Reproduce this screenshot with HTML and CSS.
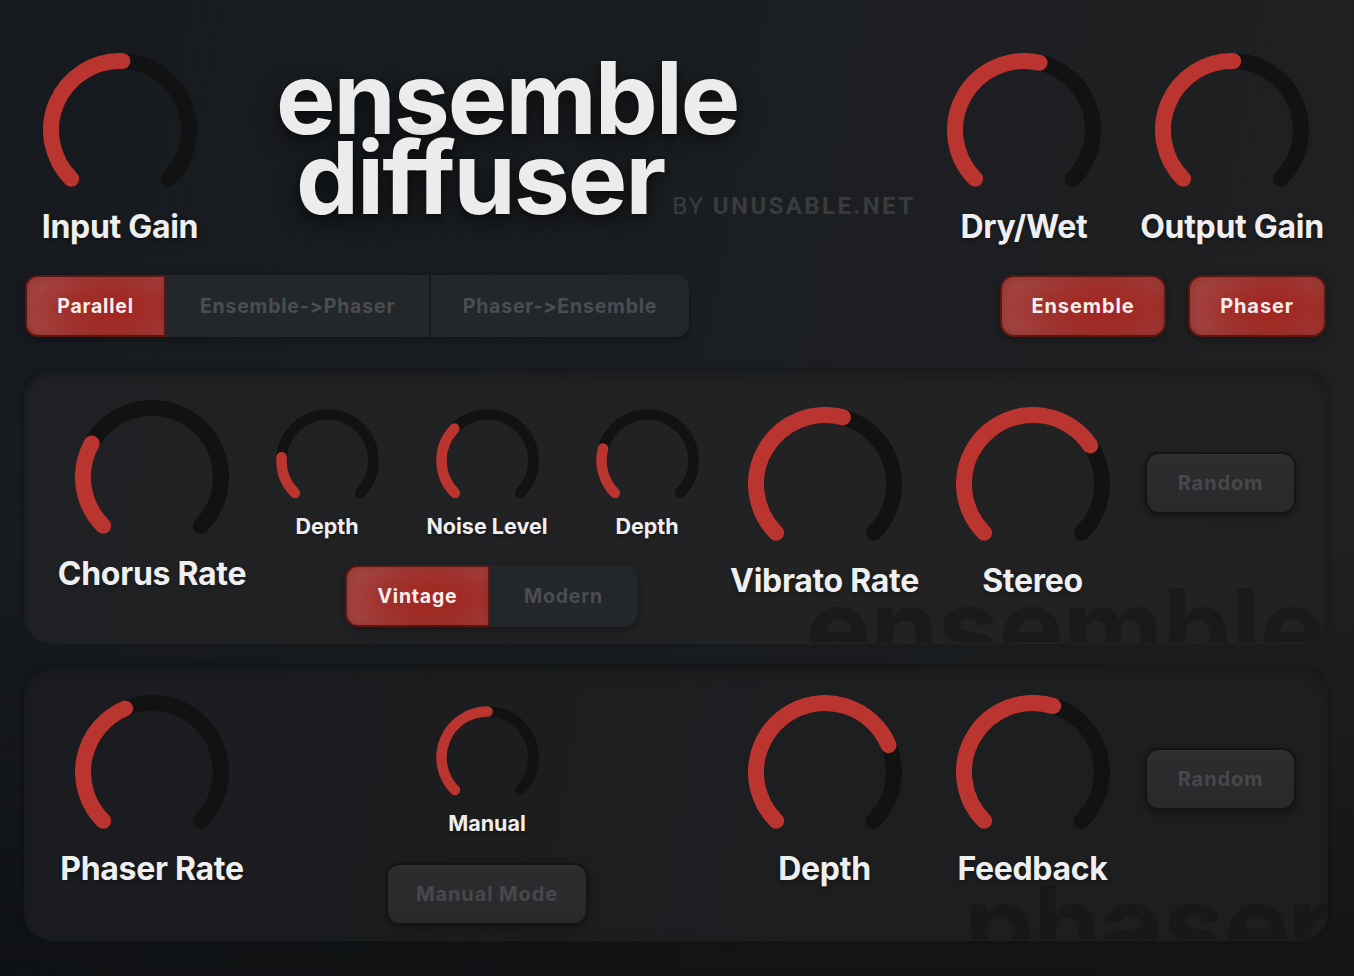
FILE: index.html
```html
<!DOCTYPE html>
<html lang="en">
<head>
<meta charset="utf-8">
<title>ensemble diffuser</title>
<link rel="stylesheet" href="styles.css">
</head>
<body>
<div class="app">
  <header class="top">
    <div class="kg kg-input">
      <svg class="knob big" viewBox="0 0 154 154"><path class="track" d="M28.21 125.79A69 69 0 1 1 125.79 125.79"/><path class="val" d="M28.21 125.79A69 69 0 0 1 79.41 8.04"/></svg>
      <div class="lbl">Input Gain</div>
    </div>
    <div class="title">
      <div class="t1">ensemble</div>
      <div class="t2">diffuser<span class="by">BY <b>UNUSABLE.NET</b></span></div>
    </div>
    <div class="kg">
      <svg class="knob big" viewBox="0 0 154 154"><path class="track" d="M28.21 125.79A69 69 0 1 1 125.79 125.79"/><path class="val" d="M28.21 125.79A69 69 0 0 1 92.52 9.77"/></svg>
      <div class="lbl">Dry/Wet</div>
    </div>
    <div class="kg kg-out">
      <svg class="knob big" viewBox="0 0 154 154"><path class="track" d="M28.21 125.79A69 69 0 1 1 125.79 125.79"/><path class="val" d="M28.21 125.79A69 69 0 0 1 78.20 8.01"/></svg>
      <div class="lbl">Output Gain</div>
    </div>
  </header>

  <div class="modes">
    <div class="seg seg-routing">
      <div class="sb on s-par">Parallel</div>
      <div class="sb s-ep">Ensemble-&gt;Phaser</div>
      <div class="sb s-pe">Phaser-&gt;Ensemble</div>
    </div>
    <div class="toggles">
      <div class="btn red b-ens">Ensemble</div>
      <div class="btn red b-pha">Phaser</div>
    </div>
  </div>

  <section class="panel p-ens">
    <div class="wm">ensemble</div>
    <div class="col c1 pt-29">
      <svg class="knob big" viewBox="0 0 154 154"><path class="track" d="M28.21 125.79A69 69 0 1 1 125.79 125.79"/><path class="val" d="M28.21 125.79A69 69 0 0 1 16.65 43.55"/></svg>
      <div class="lbl">Chorus Rate</div>
    </div>
    <div class="col c2 pt-37">
      <div class="smalls">
        <div class="sk">
          <svg class="knob small" viewBox="0 0 103 103"><path class="track" d="M18.97 84.03A46 46 0 1 1 84.03 84.03"/><path class="val" d="M18.97 84.03A46 46 0 0 1 5.61 48.29"/></svg>
          <div class="slbl">Depth</div>
        </div>
        <div class="sk">
          <svg class="knob small" viewBox="0 0 103 103"><path class="track" d="M18.97 84.03A46 46 0 1 1 84.03 84.03"/><path class="val" d="M18.97 84.03A46 46 0 0 1 18.41 19.54"/></svg>
          <div class="slbl">Noise Level</div>
        </div>
        <div class="sk">
          <svg class="knob small" viewBox="0 0 103 103"><path class="track" d="M18.97 84.03A46 46 0 1 1 84.03 84.03"/><path class="val" d="M18.97 84.03A46 46 0 0 1 7.07 39.60"/></svg>
          <div class="slbl">Depth</div>
        </div>
      </div>
      <div class="seg seg-mode">
        <div class="sb on s-vin">Vintage</div>
        <div class="sb s-mod">Modern</div>
      </div>
    </div>
    <div class="col c3 pt-36">
      <svg class="knob big" viewBox="0 0 154 154"><path class="track" d="M28.21 125.79A69 69 0 1 1 125.79 125.79"/><path class="val" d="M28.21 125.79A69 69 0 0 1 94.86 10.35"/></svg>
      <div class="lbl">Vibrato Rate</div>
    </div>
    <div class="col c4 pt-36">
      <svg class="knob big" viewBox="0 0 154 154"><path class="track" d="M28.21 125.79A69 69 0 1 1 125.79 125.79"/><path class="val" d="M28.21 125.79A69 69 0 1 1 134.20 38.42"/></svg>
      <div class="lbl">Stereo</div>
    </div>
    <div class="col c5 pt-81">
      <div class="btn grey b-rand">Random</div>
    </div>
  </section>

  <section class="panel p-pha">
    <div class="wm">phaser</div>
    <div class="col c1 pt-28">
      <svg class="knob big" viewBox="0 0 154 154"><path class="track" d="M28.21 125.79A69 69 0 1 1 125.79 125.79"/><path class="val" d="M28.21 125.79A69 69 0 0 1 50.04 13.49"/></svg>
      <div class="lbl">Phaser Rate</div>
    </div>
    <div class="col c2 pt-38 center">
      <svg class="knob small" viewBox="0 0 103 103"><path class="track" d="M18.97 84.03A46 46 0 1 1 84.03 84.03"/><path class="val" d="M18.97 84.03A46 46 0 0 1 51.5 5.5"/></svg>
      <div class="slbl">Manual</div>
      <div class="btn grey b-manual">Manual Mode</div>
    </div>
    <div class="col c3 pt-28">
      <svg class="knob big" viewBox="0 0 154 154"><path class="track" d="M28.21 125.79A69 69 0 1 1 125.79 125.79"/><path class="val" d="M28.21 125.79A69 69 0 1 1 140.51 50.04"/></svg>
      <div class="lbl">Depth</div>
    </div>
    <div class="col c4 pt-28">
      <svg class="knob big" viewBox="0 0 154 154"><path class="track" d="M28.21 125.79A69 69 0 1 1 125.79 125.79"/><path class="val" d="M28.21 125.79A69 69 0 0 1 97.18 11.02"/></svg>
      <div class="lbl">Feedback</div>
    </div>
    <div class="col c5 pt-81">
      <div class="btn grey b-rand">Random</div>
    </div>
  </section>
</div>
</body>
</html>
```

FILE: styles.css
```css
* { box-sizing: border-box; }
html, body { margin: 0; padding: 0; }
body {
  width: 1354px;
  height: 976px;
  overflow: hidden;
  font-family: Inter, "Noto Sans", "Liberation Sans", sans-serif;
  color: #efefef;
  background:
    linear-gradient(180deg, rgba(0,0,0,0) 0%, rgba(0,0,0,0) 55%, rgba(0,0,0,0.38) 100%),
    linear-gradient(100deg, #161a1f 0%, #1b1e21 45%, #1f2021 100%);
}
.app { width: 1354px; height: 976px; }

/* ---------- header ---------- */
.top {
  height: 275px;
  padding: 53px 22px 0 20px;
  display: flex;
  align-items: flex-start;
}
.kg {
  width: 200px;
  display: flex;
  flex-direction: column;
  align-items: center;
}
.kg-out { margin-left: 8px; }
.title {
  flex: 1;
  margin-left: 56px;
  margin-top: 5px;
  font-weight: 700;
  font-size: 100px;
  line-height: 80px;
  letter-spacing: -2px;
  color: #ececec;
  text-shadow: 0 8px 22px rgba(0,0,0,0.6), 0 2px 5px rgba(0,0,0,0.35);
  white-space: nowrap;
}
.t2 { margin-left: 20px; }
.by {
  font-family: Roboto, Inter, sans-serif;
  font-size: 24px;
  font-weight: 400;
  letter-spacing: 2px;
  margin-left: 8px;
  color: #3a3b3d;
  text-shadow: none;
}
.by b { font-weight: 700; letter-spacing: 2.4px; }

/* ---------- knobs ---------- */
.knob { display: block; }
.knob.big { width: 154px; height: 154px; }
.knob.small { width: 103px; height: 103px; }
.knob path { fill: none; stroke-linecap: round; }
.knob.big path { stroke-width: 16; }
.knob.small path { stroke-width: 10.5; }
.knob .track { stroke: #121212; }
.knob .val { stroke: #bb3530; }

.lbl {
  margin-top: 1px;
  font-size: 32px;
  line-height: 38px;
  font-weight: 700;
  letter-spacing: -0.3px;
  color: #efefef;
  white-space: nowrap;
  text-shadow: 0 2px 4px rgba(0,0,0,0.35);
}
.slbl {
  margin-top: 1.5px;
  font-size: 21.5px;
  line-height: 26px;
  font-weight: 700;
  color: #efefef;
  white-space: nowrap;
  text-shadow: 0 2px 3px rgba(0,0,0,0.35);
}

/* ---------- buttons ---------- */
.modes {
  height: 62px;
  padding: 0 28px 0 25px;
  display: flex;
  justify-content: space-between;
  align-items: stretch;
}
.seg {
  display: flex;
  border-radius: 13px;
  background: #24272a;
  box-shadow: 0 3px 8px rgba(0,0,0,0.35);
}
.sb {
  display: flex;
  align-items: center;
  justify-content: center;
  font-size: 19.5px;
  font-weight: 700;
  letter-spacing: 0.8px;
  color: #4a4d51;
  white-space: nowrap;
}
.sb + .sb { border-left: 2px solid #17191b; }
.sb.on + .sb { border-left: none; }
.seg-routing { width: 664px; }
.s-par { width: 141px; }
.s-ep { width: 263px; }
.s-pe { flex: 1; }

.on, .btn.red {
  color: #f5eeee;
  background:
    radial-gradient(ellipse 60% 70% at 62% 55%, #a3231e 0%, #a0302b 55%, #a3433f 100%);
  border: 2px solid #5c1513;
  box-shadow: inset 0 0 10px rgba(80,0,0,0.25);
}
.seg .on { border-radius: 13px 0 0 13px; }
.toggles { display: flex; gap: 22px; }
.btn {
  display: flex;
  align-items: center;
  justify-content: center;
  border-radius: 14px;
  font-size: 20px;
  font-weight: 700;
  letter-spacing: 0.9px;
  white-space: nowrap;
}
.btn.red { box-shadow: inset 0 0 12px rgba(60,0,0,0.25), 0 3px 8px rgba(0,0,0,0.35); }
.b-ens { width: 166px; }
.b-pha { width: 138px; }
.btn.grey {
  height: 62px;
  color: #47484b;
  background: linear-gradient(180deg, #2d2d2f 0%, #29292b 100%);
  border: 2px solid #141416;
  box-shadow: 0 3px 8px rgba(0,0,0,0.35), inset 0 1px 0 rgba(255,255,255,0.04);
}
.b-rand { width: 151px; }
.b-manual { width: 202px; margin-top: 27px; }

/* ---------- panels ---------- */
.panel {
  position: relative;
  overflow: hidden;
  margin: 34px 26px 0 24px;
  height: 272px;
  border-radius: 28px;
  padding-left: 33px;
  display: flex;
  align-items: flex-start;
  background: linear-gradient(100deg, #1f2124 0%, #222223 60%, #212121 100%);
  box-shadow:
    inset 0 5px 12px rgba(0,0,0,0.22),
    0 1px 0 rgba(255,255,255,0.05),
    0 -1px 5px rgba(0,0,0,0.35);
}
.p-pha {
  margin-top: 24px;
  height: 273px;
  background: linear-gradient(100deg, #1a1c1f 0%, #1d1e20 60%, #1e1e1f 100%);
}
.wm {
  position: absolute;
  right: 4px;
  bottom: -40px;
  font-size: 110px;
  line-height: 110px;
  font-weight: 700;
  letter-spacing: -1px;
  color: #1a1a1b;
  white-space: nowrap;
  z-index: 0;
}
.p-pha .wm { color: #171819; right: -4px; }
.col {
  position: relative;
  z-index: 1;
  display: flex;
  flex-direction: column;
  align-items: center;
}
.c1 { width: 190px; }
.c2 { width: 480px; }
.c3 { width: 195px; }
.c4 { width: 221px; }
.c5 { margin-left: 2px; }
.pt-28 { padding-top: 28px; }
.pt-29 { padding-top: 29px; }
.pt-36 { padding-top: 36px; }
.pt-37 { padding-top: 37.5px; }
.pt-38 { padding-top: 38.5px; }
.pt-81 { padding-top: 81px; }

.c2.pt-37 { align-items: stretch; }
.smalls { display: flex; }
.sk {
  width: 160px;
  display: flex;
  flex-direction: column;
  align-items: center;
}
.seg-mode {
  width: 292px;
  height: 62px;
  margin-top: 26px;
  margin-left: 98px;
}
.s-vin { width: 145px; }
.s-mod { flex: 1; }
```
